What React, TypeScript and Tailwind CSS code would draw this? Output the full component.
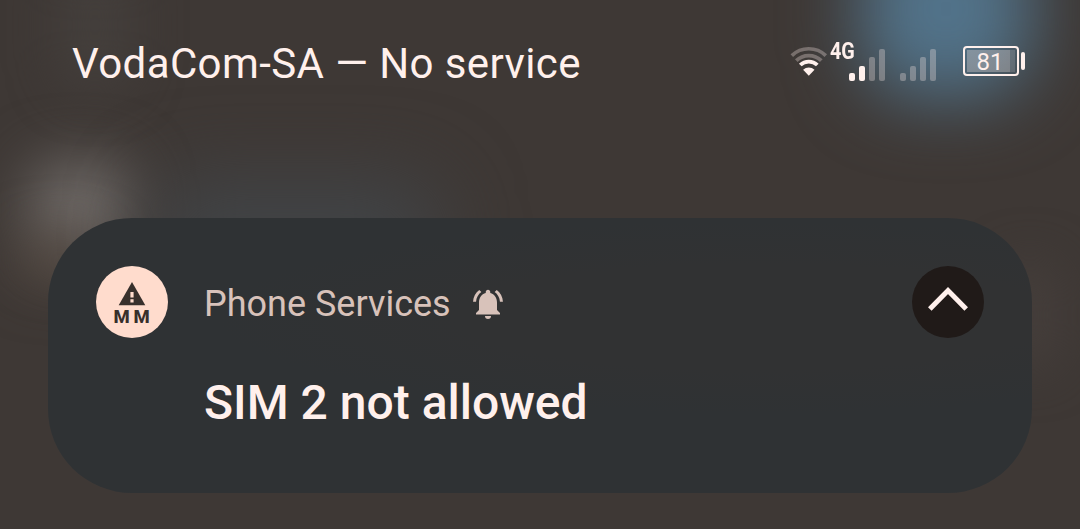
const SIGNAL_BARS = [
  { x: 0, y: 24, height: 8 },
  { x: 10, y: 17, height: 15 },
  { x: 20, y: 8, height: 24 },
  { x: 30, y: 0, height: 32 },
]

function WifiIcon() {
  return (
    <svg className="h-[30px] w-[38px]" viewBox="0 0 38 30" fill="none" stroke="#fff0ec">
      <path d="M1.8 9.6A24.4 24.4 0 0 1 35.8 9.6" strokeWidth="3.6" opacity="0.3" />
      <path d="M6.3 14.7A17.8 17.8 0 0 1 31.3 14.7" strokeWidth="3.8" opacity="0.3" />
      <path d="M10.3 19A12.2 12.2 0 0 1 27.3 19" strokeWidth="3.8" />
      <path d="M18.8 29.8L13.1 23.8A8.5 8.5 0 0 1 24.5 23.8z" fill="#fff0ec" stroke="none" />
    </svg>
  )
}

function SignalIcon({ level }: { level: number }) {
  return (
    <svg className="h-8 w-9" viewBox="0 0 36 32" fill="#fff0ec">
      {SIGNAL_BARS.map((bar, i) => (
        <rect
          key={bar.x}
          x={bar.x}
          y={bar.y}
          width="6"
          height={bar.height}
          rx="2"
          opacity={i < level ? 1 : 0.3}
        />
      ))}
    </svg>
  )
}

function Battery({ percent }: { percent: number }) {
  return (
    <div className="flex items-center gap-0.5">
      <div className="flex h-[30px] w-14 rounded-[4px] border-2 border-[#fff0ec] p-0.5">
        <div className="flex h-[22px] w-12 bg-[linear-gradient(90deg,#fff0ec4d_0_43px,#fff0ec26_43px)]">
          <span className="w-[46px] text-center text-2xl leading-[25px] text-[#fff0ec]">{percent}</span>
        </div>
      </div>
      <div className="h-[18px] w-1 rounded-[2px] bg-[#fff0ec]" />
    </div>
  )
}

function StatusBar() {
  return (
    <header className="flex h-[218px] items-start justify-between pr-[55px] pl-[72px]">
      <span className="mt-[39px] text-[42px] leading-[49px] tracking-[0.4px] whitespace-nowrap text-[#fff0ec]">
        VodaCom-SA — No service
      </span>
      <div className="flex items-start">
        <div className="mt-[46px]">
          <WifiIcon />
        </div>
        <span className="mt-[38px] ml-0.5 w-[23px] origin-left scale-x-[0.86] text-[23px] leading-7 font-bold whitespace-nowrap text-[#fff0ec]">
          4G
        </span>
        <div className="mt-[49px] -ml-1">
          <SignalIcon level={2} />
        </div>
        <div className="mt-[49px] ml-[15px]">
          <SignalIcon level={0} />
        </div>
        <div className="mt-[46px] ml-[27px]">
          <Battery percent={81} />
        </div>
      </div>
    </header>
  )
}

function AppIcon() {
  return (
    <svg className="h-[72px] w-[72px] shrink-0 rounded-full bg-[#ffdccd]" viewBox="0 0 72 72" fill="#38302c">
      <path d="M36 16L49.3 39.3H22.7z" />
      <path d="M34.4 26h3.2v5.4h-3.2zM34.4 33.2h3.2v3.3h-3.2z" fill="#ffdccd" />
      <text x="17.6" y="57" fontSize="18.5" fontWeight="800">M</text>
      <text x="37.4" y="57" fontSize="18.5" fontWeight="800">M</text>
    </svg>
  )
}

function BellIcon() {
  return (
    <svg className="h-9 w-9" viewBox="0 0 24 24" fill="#d8c2ba">
      <path d="M7.58 4.08L6.15 2.65C3.75 4.48 2.17 7.3 2.03 10.5h2c.15-2.65 1.51-4.97 3.55-6.42z" />
      <path d="M19.97 10.5h2c-.15-3.2-1.73-6.02-4.12-7.85l-1.42 1.43c2.02 1.45 3.39 3.77 3.54 6.42z" />
      <path d="M18 11c0-3.07-1.64-5.64-4.5-6.32V4c0-.83-.67-1.5-1.5-1.5s-1.5.67-1.5 1.5v.68C7.63 5.36 6 7.92 6 11v5l-2 2v1h16v-1l-2-2v-5z" />
      <path d="M10 20a2 2 0 0 0 4 0z" />
    </svg>
  )
}

function NotificationCard() {
  return (
    <article className="mx-12 flex h-[274.5px] items-start rounded-[84px] bg-[radial-gradient(ellipse_55%_35%_at_72%_36%,#313233_0%,#313233_55%,#2f3234_100%)] px-12 pt-12">
      <AppIcon />
      <div className="ml-9 flex-1">
        <div className="flex items-start">
          <span className="mt-[17px] text-4xl leading-[42px] text-[#d8c2ba]">Phone Services</span>
          <span className="mt-5 ml-[19px]">
            <BellIcon />
          </span>
        </div>
        <h1 className="mt-[50px] text-5xl leading-[56px] font-medium text-[#fff0ec]">SIM 2 not allowed</h1>
      </div>
      <button aria-label="Collapse" className="h-[72px] w-[72px] rounded-full bg-[#201a18]">
        <svg viewBox="0 0 72 72" fill="none" stroke="#fff0ec" strokeWidth="5">
          <path d="M17.8 43L36 24.5L54.2 43" />
        </svg>
      </button>
    </article>
  )
}

// Blurred wallpaper showing through the shade
function Wallpaper() {
  return (
    <div className="absolute inset-0 overflow-hidden">
      <div className="absolute -top-20 left-[860px] h-[178px] w-[172px] rounded-[60px] bg-[#52738a] blur-[36px]" />
      <div className="absolute top-[162px] left-[30px] h-[95px] w-[100px] rounded-[30px] bg-[#716c69] blur-[30px]" />
      <div className="absolute top-[240px] left-[20px] h-[40px] w-[80px] rounded-[20px] bg-[#54483f] blur-[28px]" />
      <div className="absolute top-[180px] left-[150px] h-[110px] w-[290px] rounded-[40px] bg-[#414447] blur-[40px]" />
      <div className="absolute -top-10 left-[60px] h-[130px] w-[70px] rounded-[30px] bg-[#443f3c] blur-[25px]" />
      <div className="absolute top-[260px] left-[1000px] h-[110px] w-[60px] rounded-[30px] bg-[#453e3b] blur-[24px]" />
    </div>
  )
}

export default function App() {
  return (
    <div className="relative h-[529px] w-[1080px] overflow-hidden bg-[#3e3835] font-['Roboto',sans-serif]">
      <Wallpaper />
      <main className="relative">
        <StatusBar />
        <NotificationCard />
      </main>
    </div>
  )
}
